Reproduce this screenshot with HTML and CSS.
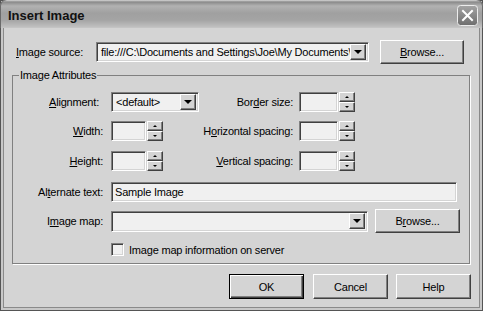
FILE: index.html
```html
<!DOCTYPE html>
<html lang="en">

<head>
    <meta charset="UTF-8">
    <title>Insert Image</title>
    <link rel="stylesheet" href="styles.css">
</head>

<body>
    <div class="window">
        <div class="titlebar">
            <span class="title">Insert Image</span>
            <span class="close">
                <svg width="21" height="21" viewBox="0 0 21 21">
                    <defs>
                        <linearGradient id="cg" x1="0" y1="0" x2="0" y2="1">
                            <stop offset="0" stop-color="#a4a4a4"/>
                            <stop offset="1" stop-color="#6e6e6e"/>
                        </linearGradient>
                    </defs>
                    <rect x="0.5" y="0.5" width="20" height="20" rx="3" fill="url(#cg)" stroke="#ececec"/>
                    <path d="M6 6 L15 15 M15 6 L6 15" stroke="#fff" stroke-width="2" stroke-linecap="square"/>
                </svg>
            </span>
        </div>

        <div class="content">
            <div class="source-row">
                <label class="source-label"><u>I</u>mage source:</label>
                <div class="combo source-combo">
                    <span class="combo-text">file:///C:\Documents and Settings\Joe\My Documents\Sample.gif</span>
                    <span class="drop-btn"><i class="tri-down"></i></span>
                </div>
                <button class="btn browse"><u>B</u>rowse...</button>
            </div>

            <fieldset class="group">
                <legend>Image Attributes</legend>

                <div class="attr-row first">
                    <label class="lbl lbl-align"><u>A</u>lignment:</label>
                    <div class="cell">
                        <div class="combo align-combo">
                            <span class="combo-text">&lt;default&gt;</span>
                            <span class="drop-btn"><i class="tri-down"></i></span>
                        </div>
                    </div>
                    <label class="lbl2">Bor<u>d</u>er size:</label>
                    <div class="spin-field">
                        <span class="field spin-box wide"></span>
                        <span class="spin"><span class="spin-btn"><i class="tri-up"></i></span><span class="spin-btn"><i class="tri-small"></i></span></span>
                    </div>
                </div>

                <div class="attr-row">
                    <label class="lbl"><u>W</u>idth:</label>
                    <div class="cell">
                        <div class="spin-field">
                            <span class="field spin-box"></span>
                            <span class="spin"><span class="spin-btn"><i class="tri-up"></i></span><span class="spin-btn"><i class="tri-small"></i></span></span>
                        </div>
                    </div>
                    <label class="lbl2">H<u>o</u>rizontal spacing:</label>
                    <div class="spin-field">
                        <span class="field spin-box wide"></span>
                        <span class="spin"><span class="spin-btn"><i class="tri-up"></i></span><span class="spin-btn"><i class="tri-small"></i></span></span>
                    </div>
                </div>

                <div class="attr-row third">
                    <label class="lbl"><u>H</u>eight:</label>
                    <div class="cell">
                        <div class="spin-field">
                            <span class="field spin-box"></span>
                            <span class="spin"><span class="spin-btn"><i class="tri-up"></i></span><span class="spin-btn"><i class="tri-small"></i></span></span>
                        </div>
                    </div>
                    <label class="lbl2"><u>V</u>ertical spacing:</label>
                    <div class="spin-field">
                        <span class="field spin-box wide"></span>
                        <span class="spin"><span class="spin-btn"><i class="tri-up"></i></span><span class="spin-btn"><i class="tri-small"></i></span></span>
                    </div>
                </div>

                <div class="attr-row alt-row">
                    <label class="lbl">Al<u>t</u>ernate text:</label>
                    <div class="field alt-field">Sample Image</div>
                </div>

                <div class="attr-row map-row">
                    <label class="lbl">I<u>m</u>age map:</label>
                    <div class="combo map-combo">
                        <span class="combo-text"></span>
                        <span class="drop-btn"><i class="tri-down"></i></span>
                    </div>
                    <button class="btn browse2">B<u>r</u>owse...</button>
                </div>

                <div class="check-row">
                    <span class="checkbox"></span>
                    <span>Ima<u>g</u>e map information on server</span>
                </div>
            </fieldset>

            <div class="buttons">
                <button class="btn dlg default">OK</button>
                <button class="btn dlg">Cancel</button>
                <button class="btn dlg">Help</button>
            </div>
        </div>
    </div>
</body>

</html>
```

FILE: styles.css
```css
body {
    margin: 0;
    background-color: #d4d4d4;
    font-family: 'Liberation Sans', Arial, sans-serif;
    font-size: 11px;
    letter-spacing: -0.2px;
    color: #000;
}

.window {
    width: 483px;
    height: 311px;
    box-sizing: border-box;
    background-color: #d4d4d4;
    box-shadow: inset 0 0 0 1px #555, inset 0 0 0 3px #c8c8c8, inset 0 0 0 4px #8a8a8a;
}

.titlebar {
    height: 28px;
    display: flex;
    align-items: center;
    justify-content: space-between;
    padding: 0 5px 0 8px;
    border-radius: 6px 6px 0 0;
    background: linear-gradient(#d8d8d8 0, #8a8a8a 2px, #b2b2b2 6px, #a0a0a0 13px, #a4a4a4 20px, #c0c0c0 27px, #c8c8c8 28px);
    box-shadow: inset 1px 0 #6a6a6a, inset -1px 0 #6a6a6a;
}

.title {
    font-weight: bold;
    font-size: 13px;
    letter-spacing: 0;
    color: #111;
    margin-top: 2px;
}

.close {
    display: flex;
    margin-top: 2px;
}

.content {
    padding: 12px 12px 0 12px;
}

/* raised + sunken controls */
.btn {
    font-family: inherit;
    font-size: 11px;
    letter-spacing: inherit;
    color: #000;
    background-color: #d4d4d4;
    border: 1px solid;
    border-color: #fff #404040 #404040 #fff;
    box-shadow: inset -1px -1px #808080;
    padding: 0;
}

.field, .combo {
    box-sizing: border-box;
    background-color: #f0f0f0;
    border: 1px solid;
    border-color: #808080 #fff #fff #808080;
    box-shadow: inset 1px 1px #404040, inset -1px -1px #d4d4d4;
}

.combo {
    display: flex;
    align-items: center;
    padding: 2px;
}
.combo-text {
    flex: 1;
    white-space: nowrap;
    overflow: hidden;
    padding-left: 2px;
}
.drop-btn {
    width: 16px;
    height: 16px;
    box-sizing: border-box;
    display: flex;
    align-items: center;
    justify-content: center;
    background-color: #d4d4d4;
    border: 1px solid;
    border-color: #fff #404040 #404040 #fff;
    box-shadow: inset -1px -1px #808080;
}
.tri-down {
    width: 0;
    height: 0;
    border-left: 4px solid transparent;
    border-right: 4px solid transparent;
    border-top: 4px solid #000;
}

.source-row {
    display: flex;
    align-items: center;
    height: 24px;
}
.source-label {
    width: 80px;
    margin-left: 4px;
}
.source-combo {
    width: 273px;
    height: 20px;
}
.browse {
    width: 84px;
    height: 24px;
    margin-left: 11px;
}

.group {
    width: 458px;
    box-sizing: border-box;
    margin: 5px 0 0 0;
    padding: 0 0 7px 0;
    border: 1px solid #808080;
    box-shadow: 1px 1px #fff;
}
.group legend {
    margin-left: 6px;
    padding: 0 1px;
    line-height: 13px;
}

.attr-row {
    display: flex;
    align-items: center;
    height: 21px;
    margin-top: 8px;
}
.attr-row.first {
    margin-top: 9px;
}
.attr-row.third {
    margin-top: 9px;
}
.lbl {
    width: 90px;
    text-align: right;
    margin-right: 8px;
}
.lbl-align {
    width: 86px;
    margin-right: 12px;
}
.cell {
    width: 88px;
}
.lbl2 {
    width: 94px;
    text-align: right;
    margin-right: 6px;
}

.align-combo {
    width: 88px;
    height: 20px;
}

.spin-field {
    display: flex;
    align-items: center;
    gap: 1px;
}
.spin-box {
    display: block;
    width: 35px;
    height: 20px;
}
.spin-box.wide {
    width: 39px;
}
.spin {
    display: flex;
    flex-direction: column;
}
.spin-btn {
    width: 16px;
    height: 10px;
    box-sizing: border-box;
    display: flex;
    align-items: center;
    justify-content: center;
    background-color: #d4d4d4;
    border: 1px solid;
    border-color: #fff #404040 #404040 #fff;
    box-shadow: inset -1px -1px #808080;
}
.tri-up {
    width: 0;
    height: 0;
    border-left: 2px solid transparent;
    border-right: 2px solid transparent;
    border-bottom: 2px solid #000;
}
.tri-small {
    width: 0;
    height: 0;
    border-left: 2px solid transparent;
    border-right: 2px solid transparent;
    border-top: 2px solid #000;
}

.alt-row {
    margin-top: 11px;
    height: 20px;
}
.alt-field {
    width: 346px;
    height: 20px;
    padding: 3px 0 0 3px;
}

.map-row {
    margin-top: 7px;
    height: 24px;
}
.map-combo {
    width: 257px;
    height: 21px;
}
.browse2 {
    width: 85px;
    height: 24px;
    margin-left: 7px;
}

.check-row {
    display: flex;
    align-items: center;
    margin: 10px 0 0 98px;
    height: 13px;
}
.checkbox {
    width: 13px;
    height: 13px;
    box-sizing: border-box;
    margin-right: 5px;
    background-color: #f0f0f0;
    border: 1px solid;
    border-color: #808080 #fff #fff #808080;
    box-shadow: inset 1px 1px #404040, inset -1px -1px #d4d4d4;
}

.buttons {
    display: flex;
    justify-content: flex-end;
    gap: 8px;
    margin-top: 10px;
}
.dlg {
    width: 75px;
    height: 25px;
}
.dlg.default {
    border: 1px solid #000;
    box-shadow: inset 1px 1px #fff, inset -1px -1px #404040, inset -2px -2px #808080;
    margin-right: 1px;
}
```
